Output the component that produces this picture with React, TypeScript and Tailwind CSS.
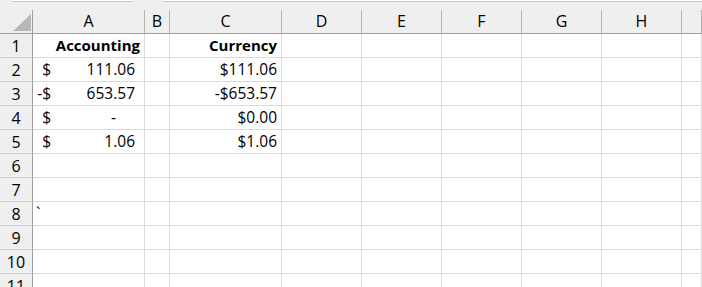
const cols = [
  { key: 'A', w: 'w-[112px]' },
  { key: 'B', w: 'w-[25px]' },
  { key: 'C', w: 'w-[112px]' },
  { key: 'D', w: 'w-[80px]' },
  { key: 'E', w: 'w-[80px]' },
  { key: 'F', w: 'w-[80px]' },
  { key: 'G', w: 'w-[80px]' },
  { key: 'H', w: 'w-[80px]' },
  { key: 'I', w: 'flex-1' },
];

type Acct = { sign: string; value: string; zero?: boolean };

const rows: { a?: Acct | string; c?: string; bold?: boolean; tick?: boolean }[] = [
  { a: 'Accounting', c: 'Currency', bold: true },
  { a: { sign: '$', value: '111.06' }, c: '$111.06' },
  { a: { sign: '-$', value: '653.57' }, c: '-$653.57' },
  { a: { sign: '$', value: '-', zero: true }, c: '$0.00' },
  { a: { sign: '$', value: '1.06' }, c: '$1.06' },
  {},
  {},
  { tick: true },
  {},
  {},
  {},
];

function AccountingCell({ v }: { v: Acct }) {
  return (
    <div className="flex h-full items-center justify-between">
      <span className="w-[18px] text-right">{v.sign}</span>
      <span className={v.zero ? 'pr-[28px]' : 'pr-[9px]'}>{v.value}</span>
    </div>
  );
}

export default function App() {
  return (
    <div
      className="h-[287px] w-[702px] overflow-hidden bg-white text-[15.5px] text-black"
      style={{ fontFamily: '"Open Sans", "Noto Sans", sans-serif' }}
    >
      {/* remains of name box / formula bar */}
      <div className="flex h-[2px] bg-[#efefef]">
        <div className="ml-[11px] w-[123px] rounded-b-[3px] border-b border-[#c9c9c9] bg-white" />
        <div className="ml-[29px] flex-1 border-b border-[#c9c9c9] bg-white" />
      </div>

      {/* column headers */}
      <div className="flex h-[32px] border-b border-[#9e9e9e] bg-[#efefef]">
        <div className="relative w-[33px] shrink-0 pt-[8px]">
          <div className="h-full border-r border-[#9e9e9e]" />
          <svg className="absolute right-[2px] bottom-[2px]" width="18" height="17" viewBox="0 0 18 17">
            <polygon points="18,0 18,17 0,17" fill="#b7b7b7" />
          </svg>
        </div>
        {cols.map((c) => (
          <div key={c.key} className={`${c.w} shrink-0 pt-[8px]`}>
            <div className="flex h-full items-center justify-center border-r border-[#b4b4b4] pb-[1px] text-[16px]">
              {c.key === 'I' ? '' : c.key}
            </div>
          </div>
        ))}
      </div>

      {/* body */}
      {rows.map((r, i) => (
        <div key={i} className="flex h-[24px]">
          <div className="flex w-[33px] shrink-0 items-center justify-center border-r border-b border-r-[#9e9e9e] border-b-[#d2d2d2] bg-[#efefef] text-[16px]">
            {i + 1}
          </div>
          {cols.map((c) => (
            <div
              key={c.key}
              className={`${c.w} shrink-0 overflow-hidden border-r border-b border-[#dadada] ${r.bold ? 'text-[15px] font-bold' : ''}`}
            >
              {c.key === 'A' && r.a && typeof r.a === 'string' && (
                <div className="flex h-full items-center justify-end pr-[4px]">{r.a}</div>
              )}
              {c.key === 'A' && r.a && typeof r.a !== 'string' && <AccountingCell v={r.a} />}
              {c.key === 'A' && r.tick && <div className="flex h-full items-center pl-[3px]">`</div>}
              {c.key === 'C' && r.c && (
                <div className="flex h-full items-center justify-end pr-[4px]">{r.c}</div>
              )}
            </div>
          ))}
        </div>
      ))}
    </div>
  );
}
